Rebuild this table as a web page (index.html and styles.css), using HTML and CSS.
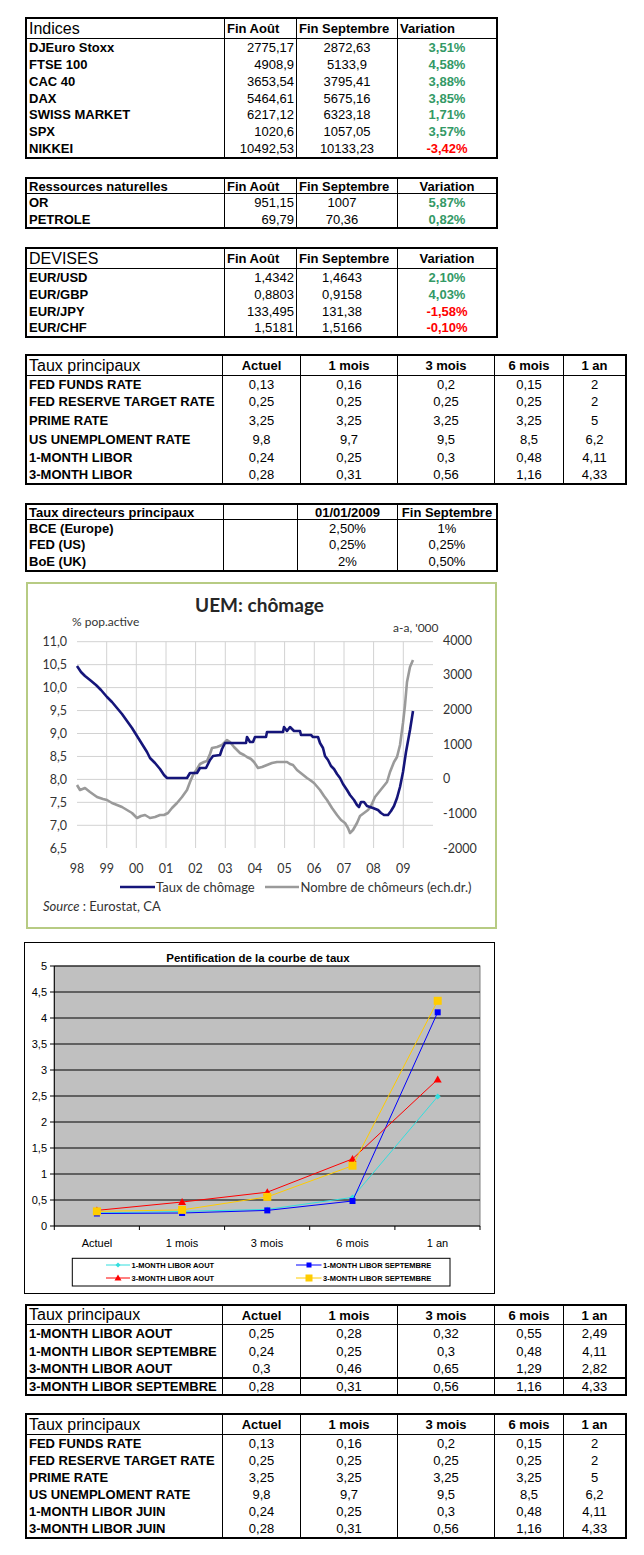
FILE: index.html
```html
<!DOCTYPE html>
<html lang="fr">
<head>
<meta charset="utf-8">
<title>Marchés</title>
<link rel="stylesheet" href="styles.css">
</head>
<body>
<main class="page">

  <section class="tbl cols4 t-idx">
    <div class="row hd"><div class="c big">Indices</div><div class="c b">Fin Août</div><div class="c b">Fin Septembre</div><div class="c b">Variation</div></div>
    <div class="row"><div class="c b">DJEuro Stoxx</div><div class="c r">2775,17</div><div class="c m">2872,63</div><div class="c m b up">3,51%</div></div>
    <div class="row"><div class="c b">FTSE 100</div><div class="c r">4908,9</div><div class="c m">5133,9</div><div class="c m b up">4,58%</div></div>
    <div class="row"><div class="c b">CAC 40</div><div class="c r">3653,54</div><div class="c m">3795,41</div><div class="c m b up">3,88%</div></div>
    <div class="row"><div class="c b">DAX</div><div class="c r">5464,61</div><div class="c m">5675,16</div><div class="c m b up">3,85%</div></div>
    <div class="row"><div class="c b">SWISS MARKET</div><div class="c r">6217,12</div><div class="c m">6323,18</div><div class="c m b up">1,71%</div></div>
    <div class="row"><div class="c b">SPX</div><div class="c r">1020,6</div><div class="c m">1057,05</div><div class="c m b up">3,57%</div></div>
    <div class="row"><div class="c b">NIKKEI</div><div class="c r">10492,53</div><div class="c m">10133,23</div><div class="c m b down">-3,42%</div></div>
  </section>

  <section class="tbl cols4 t-res">
    <div class="row hd"><div class="c b">Ressources naturelles</div><div class="c b">Fin Août</div><div class="c b">Fin Septembre</div><div class="c b m">Variation</div></div>
    <div class="row"><div class="c b">OR</div><div class="c r">951,15</div><div class="c m off">1007</div><div class="c m b up">5,87%</div></div>
    <div class="row"><div class="c b">PETROLE</div><div class="c r">69,79</div><div class="c m off">70,36</div><div class="c m b up">0,82%</div></div>
  </section>

  <section class="tbl cols4 t-dev">
    <div class="row hd"><div class="c big">DEVISES</div><div class="c b">Fin Août</div><div class="c b">Fin Septembre</div><div class="c b m">Variation</div></div>
    <div class="row"><div class="c b">EUR/USD</div><div class="c r">1,4342</div><div class="c m off">1,4643</div><div class="c m b up">2,10%</div></div>
    <div class="row"><div class="c b">EUR/GBP</div><div class="c r">0,8803</div><div class="c m off">0,9158</div><div class="c m b up">4,03%</div></div>
    <div class="row"><div class="c b">EUR/JPY</div><div class="c r">133,495</div><div class="c m off">131,38</div><div class="c m b down">-1,58%</div></div>
    <div class="row"><div class="c b">EUR/CHF</div><div class="c r">1,5181</div><div class="c m off">1,5166</div><div class="c m b down">-0,10%</div></div>
  </section>

  <section class="tbl cols6 t-taux1">
    <div class="row hd"><div class="c big">Taux principaux</div><div class="c b m">Actuel</div><div class="c b m">1 mois</div><div class="c b m">3 mois</div><div class="c b m">6 mois</div><div class="c b m">1 an</div></div>
    <div class="row"><div class="c b">FED FUNDS RATE</div><div class="c m">0,13</div><div class="c m">0,16</div><div class="c m">0,2</div><div class="c m">0,15</div><div class="c m">2</div></div>
    <div class="row"><div class="c b">FED RESERVE TARGET RATE</div><div class="c m">0,25</div><div class="c m">0,25</div><div class="c m">0,25</div><div class="c m">0,25</div><div class="c m">2</div></div>
    <div class="row"><div class="c b">PRIME RATE</div><div class="c m">3,25</div><div class="c m">3,25</div><div class="c m">3,25</div><div class="c m">3,25</div><div class="c m">5</div></div>
    <div class="row"><div class="c b">US UNEMPLOMENT RATE</div><div class="c m">9,8</div><div class="c m">9,7</div><div class="c m">9,5</div><div class="c m">8,5</div><div class="c m">6,2</div></div>
    <div class="row"><div class="c b">1-MONTH LIBOR</div><div class="c m">0,24</div><div class="c m">0,25</div><div class="c m">0,3</div><div class="c m">0,48</div><div class="c m">4,11</div></div>
    <div class="row"><div class="c b">3-MONTH LIBOR</div><div class="c m">0,28</div><div class="c m">0,31</div><div class="c m">0,56</div><div class="c m">1,16</div><div class="c m">4,33</div></div>
  </section>

  <section class="tbl cols4d t-dir">
    <div class="row hd"><div class="c b">Taux directeurs principaux</div><div class="c"></div><div class="c b m">01/01/2009</div><div class="c b m">Fin Septembre</div></div>
    <div class="row"><div class="c b">BCE (Europe)</div><div class="c"></div><div class="c m">2,50%</div><div class="c m">1%</div></div>
    <div class="row"><div class="c b">FED (US)</div><div class="c"></div><div class="c m">0,25%</div><div class="c m">0,25%</div></div>
    <div class="row"><div class="c b">BoE (UK)</div><div class="c"></div><div class="c m">2%</div><div class="c m">0,50%</div></div>
  </section>

  <figure class="chart chart-uem">
    <svg class="chart-svg" width="467" height="343" viewBox="28 584 467 343" xmlns="http://www.w3.org/2000/svg">
      <text class="u-title" x="259.5" y="611.5">UEM: chômage</text>
      <text class="u-small" x="72" y="625.5">% pop.active</text>
      <text class="u-small" x="393" y="632">a-a, '000</text>
      <g class="u-grid">
        <line x1="77" y1="641.7" x2="433" y2="641.7"/>
        <line x1="77" y1="664.65" x2="433" y2="664.65"/>
        <line x1="77" y1="687.6" x2="433" y2="687.6"/>
        <line x1="77" y1="710.55" x2="433" y2="710.55"/>
        <line x1="77" y1="733.5" x2="433" y2="733.5"/>
        <line x1="77" y1="756.45" x2="433" y2="756.45"/>
        <line x1="77" y1="779.4" x2="433" y2="779.4"/>
        <line x1="77" y1="802.35" x2="433" y2="802.35"/>
        <line x1="77" y1="825.3" x2="433" y2="825.3"/>
        <line x1="106.7" y1="641.7" x2="106.7" y2="848"/>
        <line x1="136.3" y1="641.7" x2="136.3" y2="848"/>
        <line x1="166" y1="641.7" x2="166" y2="848"/>
        <line x1="195.6" y1="641.7" x2="195.6" y2="848"/>
        <line x1="225.3" y1="641.7" x2="225.3" y2="848"/>
        <line x1="255" y1="641.7" x2="255" y2="848"/>
        <line x1="284.6" y1="641.7" x2="284.6" y2="848"/>
        <line x1="314.3" y1="641.7" x2="314.3" y2="848"/>
        <line x1="344" y1="641.7" x2="344" y2="848"/>
        <line x1="373.6" y1="641.7" x2="373.6" y2="848"/>
        <line x1="403.3" y1="641.7" x2="403.3" y2="848"/>
      </g>
      <g class="u-axis u-left">
        <text x="67" y="646">11,0</text>
        <text x="67" y="669">10,5</text>
        <text x="67" y="692">10,0</text>
        <text x="67" y="715">9,5</text>
        <text x="67" y="738">9,0</text>
        <text x="67" y="760.5">8,5</text>
        <text x="67" y="783.5">8,0</text>
        <text x="67" y="806.5">7,5</text>
        <text x="67" y="829.5">7,0</text>
        <text x="67" y="852.5">6,5</text>
      </g>
      <g class="u-axis">
        <text x="443" y="644.5">4000</text>
        <text x="443" y="679">3000</text>
        <text x="443" y="713.5">2000</text>
        <text x="443" y="748.5">1000</text>
        <text x="443" y="783">0</text>
        <text x="443" y="817.5">-1000</text>
        <text x="443" y="852.5">-2000</text>
      </g>
      <g class="u-axis u-mid">
        <text x="77" y="872.5">98</text>
        <text x="106.7" y="872.5">99</text>
        <text x="136.3" y="872.5">00</text>
        <text x="166" y="872.5">01</text>
        <text x="195.6" y="872.5">02</text>
        <text x="225.3" y="872.5">03</text>
        <text x="255" y="872.5">04</text>
        <text x="284.6" y="872.5">05</text>
        <text x="314.3" y="872.5">06</text>
        <text x="344" y="872.5">07</text>
        <text x="373.6" y="872.5">08</text>
        <text x="403.3" y="872.5">09</text>
      </g>
      <polyline class="u-gray" points="77,785 80,790 85,788 90,792 97,797 103,799 107,800 112,803 117,805 122,807 127,810 132,813 137,818 141,816 145,815 150,818 155,817 160,815 164,815 168,813 172,808 177,803 182,797 187,790 190,782 193,775 197,769 200,764 204,762 207,761 210,754 212,748 217,747 222,745 227,740 230,742 234,747 240,753 244,755 247,757 251,759 254,762 258,768 262,767 267,765 272,763 277,762 282,762 287,762 290,764 293,765 297,770 302,774 307,778 310,780 314,783 320,790 324,796 327,800 332,808 337,815 341,820 345,823 348,828 350,833 353,830 357,823 360,816 364,813 368,810 371,806 375,797 379,792 383,787 387,782 390,772 394,762 397,757 400,745 403,723 405,705 407,682 410,667 413,660"/>
      <polyline class="u-navy" points="77,666 81,672 85,676 90,680 96,685 101,690 107,697 112,702 117,708 122,714 127,721 132,728 137,736 142,744 147,752 150,758 155,763 160,769 164,775 167,778 187,778 190,773 197,773 200,768 206,768 210,760 213,756 220,755 222,749 225,743 246,743 247,737 250,742 253,742 255,737 266,737 267,732 283,732 284,727 287,731 290,727 294,731 300,731 301,735 311,735 313,737 318,737 320,743 323,748 325,756 328,760 331,766 334,769 337,774 340,778 343,784 347,790 350,795 354,800 357,805 359,807 361,802 364,802 367,806 373,808 378,810 381,813 384,815 388,815 391,811 394,806 397,798 400,787 403,772 406,752 410,730 413,711"/>
      <line class="u-navy" x1="120" y1="887" x2="155" y2="887"/>
      <text class="u-leg" x="156" y="891.5">Taux de chômage</text>
      <line class="u-gray" x1="265" y1="887" x2="299" y2="887"/>
      <text class="u-leg" x="300.5" y="891.5">Nombre de chômeurs (ech.dr.)</text>
      <text class="u-leg" x="43" y="911"><tspan class="u-it">Source</tspan> : Eurostat, CA</text>
    </svg>
  </figure>

  <figure class="chart chart-pent">
    <svg class="chart-svg" width="469" height="350" viewBox="25 943 469 350" xmlns="http://www.w3.org/2000/svg">
      <text class="p-title" x="258" y="962">Pentification de la courbe de taux</text>
      <rect class="p-plot" x="54.3" y="966" width="425.7" height="260"/>
      <g class="p-grid">
        <line x1="54.3" y1="966" x2="480" y2="966"/>
        <line x1="54.3" y1="992" x2="480" y2="992"/>
        <line x1="54.3" y1="1018" x2="480" y2="1018"/>
        <line x1="54.3" y1="1044" x2="480" y2="1044"/>
        <line x1="54.3" y1="1070" x2="480" y2="1070"/>
        <line x1="54.3" y1="1096" x2="480" y2="1096"/>
        <line x1="54.3" y1="1122" x2="480" y2="1122"/>
        <line x1="54.3" y1="1148" x2="480" y2="1148"/>
        <line x1="54.3" y1="1174" x2="480" y2="1174"/>
        <line x1="54.3" y1="1200" x2="480" y2="1200"/>
        <line x1="54.3" y1="966" x2="54.3" y2="1226"/>
        <line x1="54.3" y1="1226" x2="480" y2="1226"/>
        <line x1="50" y1="966" x2="54.3" y2="966"/>
        <line x1="50" y1="992" x2="54.3" y2="992"/>
        <line x1="50" y1="1018" x2="54.3" y2="1018"/>
        <line x1="50" y1="1044" x2="54.3" y2="1044"/>
        <line x1="50" y1="1070" x2="54.3" y2="1070"/>
        <line x1="50" y1="1096" x2="54.3" y2="1096"/>
        <line x1="50" y1="1122" x2="54.3" y2="1122"/>
        <line x1="50" y1="1148" x2="54.3" y2="1148"/>
        <line x1="50" y1="1174" x2="54.3" y2="1174"/>
        <line x1="50" y1="1200" x2="54.3" y2="1200"/>
        <line x1="50" y1="1226" x2="54.3" y2="1226"/>
        <line x1="54.3" y1="1226" x2="54.3" y2="1230"/>
        <line x1="139.4" y1="1226" x2="139.4" y2="1230"/>
        <line x1="224.6" y1="1226" x2="224.6" y2="1230"/>
        <line x1="309.7" y1="1226" x2="309.7" y2="1230"/>
        <line x1="394.9" y1="1226" x2="394.9" y2="1230"/>
        <line x1="480" y1="1226" x2="480" y2="1230"/>
      </g>
      <g class="p-axis p-left">
        <text x="47" y="970">5</text>
        <text x="47" y="996">4,5</text>
        <text x="47" y="1022">4</text>
        <text x="47" y="1048">3,5</text>
        <text x="47" y="1074">3</text>
        <text x="47" y="1100">2,5</text>
        <text x="47" y="1126">2</text>
        <text x="47" y="1152">1,5</text>
        <text x="47" y="1178">1</text>
        <text x="47" y="1204">0,5</text>
        <text x="47" y="1230">0</text>
      </g>
      <g class="p-axis p-mid">
        <text x="97" y="1247">Actuel</text>
        <text x="182" y="1247">1 mois</text>
        <text x="267" y="1247">3 mois</text>
        <text x="352.5" y="1247">6 mois</text>
        <text x="437.5" y="1247">1 an</text>
      </g>
      <polyline class="s-cyan" points="96.9,1213 182.1,1211.4 267.3,1209.4 352.5,1197.4 437.7,1096.5"/>
      <g class="s-cyan-m">
        <polygon points="96.9,1210 99.9,1213 96.9,1216 93.9,1213"/>
        <polygon points="182.1,1208.4 185.1,1211.4 182.1,1214.4 179.1,1211.4"/>
        <polygon points="267.3,1206.4 270.3,1209.4 267.3,1212.4 264.3,1209.4"/>
        <polygon points="352.5,1194.4 355.5,1197.4 352.5,1200.4 349.5,1197.4"/>
        <polygon points="437.7,1093.5 440.7,1096.5 437.7,1099.5 434.7,1096.5"/>
      </g>
      <polyline class="s-blue" points="96.9,1213.5 182.1,1213 267.3,1210.4 352.5,1201 437.7,1012.3"/>
      <g class="s-blue-m">
        <rect x="93.9" y="1210.5" width="6" height="6"/>
        <rect x="179.1" y="1210" width="6" height="6"/>
        <rect x="264.3" y="1207.4" width="6" height="6"/>
        <rect x="349.5" y="1198" width="6" height="6"/>
        <rect x="434.7" y="1009.3" width="6" height="6"/>
      </g>
      <polyline class="s-red" points="96.9,1210.4 182.1,1202 267.3,1192.2 352.5,1158.9 437.7,1079.4"/>
      <g class="s-red-m">
        <polygon points="96.9,1206.4 100.9,1213.4 92.9,1213.4"/>
        <polygon points="182.1,1198 186.1,1205 178.1,1205"/>
        <polygon points="267.3,1188.2 271.3,1195.2 263.3,1195.2"/>
        <polygon points="352.5,1154.9 356.5,1161.9 348.5,1161.9"/>
        <polygon points="437.7,1075.4 441.7,1082.4 433.7,1082.4"/>
      </g>
      <polyline class="s-gold" points="96.9,1211.4 182.1,1209.9 267.3,1196.9 352.5,1165.7 437.7,1000.8"/>
      <g class="s-gold-m">
        <rect x="92.9" y="1207.4" width="8" height="8"/>
        <rect x="178.1" y="1205.9" width="8" height="8"/>
        <rect x="263.3" y="1192.9" width="8" height="8"/>
        <rect x="348.5" y="1161.7" width="8" height="8"/>
        <rect x="433.7" y="996.8" width="8" height="8"/>
      </g>
      <rect class="p-legend" x="72.3" y="1258.3" width="377.7" height="27.7"/>
      <line class="s-cyan" x1="106" y1="1265" x2="130" y2="1265"/>
      <polygon class="s-cyan-m" points="118,1262.5 120.5,1265 118,1267.5 115.5,1265"/>
      <text class="p-leg" x="131.5" y="1267.7">1-MONTH LIBOR AOUT</text>
      <line class="s-blue" x1="296" y1="1265" x2="321.5" y2="1265"/>
      <rect class="s-blue-m" x="306.5" y="1262.5" width="5" height="5"/>
      <text class="p-leg" x="323" y="1267.7">1-MONTH LIBOR SEPTEMBRE</text>
      <line class="s-red" x1="106" y1="1278" x2="130" y2="1278"/>
      <polygon class="s-red-m" points="118,1274.5 121.5,1280.5 114.5,1280.5"/>
      <text class="p-leg" x="131.5" y="1280.7">3-MONTH LIBOR AOUT</text>
      <line class="s-gold" x1="296" y1="1278" x2="321.5" y2="1278"/>
      <rect class="s-gold-m" x="305.5" y="1274.5" width="7" height="7"/>
      <text class="p-leg" x="323" y="1280.7">3-MONTH LIBOR SEPTEMBRE</text>
    </svg>
  </figure>

  <section class="tbl cols6 t-taux2">
    <div class="row hd"><div class="c big">Taux principaux</div><div class="c b m">Actuel</div><div class="c b m">1 mois</div><div class="c b m">3 mois</div><div class="c b m">6 mois</div><div class="c b m">1 an</div></div>
    <div class="row"><div class="c b">1-MONTH LIBOR AOUT</div><div class="c m">0,25</div><div class="c m">0,28</div><div class="c m">0,32</div><div class="c m">0,55</div><div class="c m">2,49</div></div>
    <div class="row"><div class="c b">1-MONTH LIBOR SEPTEMBRE</div><div class="c m">0,24</div><div class="c m">0,25</div><div class="c m">0,3</div><div class="c m">0,48</div><div class="c m">4,11</div></div>
    <div class="row"><div class="c b">3-MONTH LIBOR AOUT</div><div class="c m">0,3</div><div class="c m">0,46</div><div class="c m">0,65</div><div class="c m">1,29</div><div class="c m">2,82</div></div>
    <div class="row sep"><div class="c b">3-MONTH LIBOR SEPTEMBRE</div><div class="c m">0,28</div><div class="c m">0,31</div><div class="c m">0,56</div><div class="c m">1,16</div><div class="c m">4,33</div></div>
  </section>

  <section class="tbl cols6 t-taux3">
    <div class="row hd"><div class="c big">Taux principaux</div><div class="c b m">Actuel</div><div class="c b m">1 mois</div><div class="c b m">3 mois</div><div class="c b m">6 mois</div><div class="c b m">1 an</div></div>
    <div class="row"><div class="c b">FED FUNDS RATE</div><div class="c m">0,13</div><div class="c m">0,16</div><div class="c m">0,2</div><div class="c m">0,15</div><div class="c m">2</div></div>
    <div class="row"><div class="c b">FED RESERVE TARGET RATE</div><div class="c m">0,25</div><div class="c m">0,25</div><div class="c m">0,25</div><div class="c m">0,25</div><div class="c m">2</div></div>
    <div class="row"><div class="c b">PRIME RATE</div><div class="c m">3,25</div><div class="c m">3,25</div><div class="c m">3,25</div><div class="c m">3,25</div><div class="c m">5</div></div>
    <div class="row"><div class="c b">US UNEMPLOMENT RATE</div><div class="c m">9,8</div><div class="c m">9,7</div><div class="c m">9,5</div><div class="c m">8,5</div><div class="c m">6,2</div></div>
    <div class="row"><div class="c b">1-MONTH LIBOR JUIN</div><div class="c m">0,24</div><div class="c m">0,25</div><div class="c m">0,3</div><div class="c m">0,48</div><div class="c m">4,11</div></div>
    <div class="row"><div class="c b">3-MONTH LIBOR JUIN</div><div class="c m">0,28</div><div class="c m">0,31</div><div class="c m">0,56</div><div class="c m">1,16</div><div class="c m">4,33</div></div>
  </section>

</main>
</body>
</html>
```

FILE: styles.css
```css
* { box-sizing: border-box; }

html, body {
  margin: 0;
  padding: 0;
  background: #ffffff;
}

body {
  font-family: "Liberation Sans", Arial, sans-serif;
  color: #000;
}

.page {
  display: flex;
  flex-direction: column;
  align-items: flex-start;
  padding: 17px 0 0 25px;
}

/* ---------- spreadsheet tables ---------- */
.tbl {
  display: grid;
  border: 2px solid #000;
  background: #fff;
}

.cols4  { grid-template-columns: 197px 72px 101px 99px; }
.cols4d { grid-template-columns: 196px 74px 100px 99px; }
.cols6  { grid-template-columns: 195px 78px 97px 97px 69px 62px; }

.row { display: contents; }

.c {
  display: flex;
  align-items: center;
  padding: 0 2px;
  font-size: 13px;
  line-height: 1;
  white-space: nowrap;
  overflow: hidden;
}

.row > .c + .c { border-left: 1px solid #000; }
.hd > .c { border-bottom: 1px solid #000; }
.sep > .c { border-top: 2px solid #000; }

.big { font-size: 16px; font-weight: 400; }
.b { font-weight: 700; }
.r { justify-content: flex-end; }
.m { justify-content: center; }
.off { padding-right: 12px; }

.up { color: #339966; }
.down { color: #ff0000; }

.t-idx   { grid-template-rows: 20px repeat(7, 16.86px); }
.t-res   { margin-top: 18px; grid-template-rows: 15px repeat(2, 16.7px); }
.t-dev   { margin-top: 18px; grid-template-rows: 20px repeat(4, 16.7px); }
.t-taux1 { margin-top: 16px; grid-template-rows: 20px 17px 17px 20px 19px 17px 17px; }
.t-dir   { margin-top: 18px; grid-template-rows: 15px repeat(3, 16.5px); }
.t-taux2 { margin-top: 10px; grid-template-rows: 19px repeat(4, 17.25px); }
.t-taux3 { margin-top: 17px; grid-template-rows: 20px repeat(6, 17px); }

/* ---------- charts ---------- */
.chart {
  margin: 0;
  background: #fff;
}

.chart-svg { display: block; }

.chart-uem {
  margin-top: 10.5px;
  margin-left: 1px;
  width: 471px;
  height: 347px;
  border: 2px solid #b7cb83;
}

.chart-pent {
  margin-top: 13px;
  margin-left: -1px;
  width: 471px;
  height: 352px;
  border: 1px solid #000;
}

/* UEM chart */
.u-title {
  font-family: Lato, "Open Sans", sans-serif;
  font-size: 19px;
  font-weight: 700;
  fill: #262626;
  text-anchor: middle;
}
.u-small {
  font-family: Lato, "Open Sans", sans-serif;
  font-size: 12px;
  fill: #333;
}
.u-grid line {
  stroke: #d2d2d2;
  stroke-width: 1;
}
.u-axis text {
  font-family: Lato, "Open Sans", sans-serif;
  font-size: 12.5px;
  fill: #333;
}
.u-left text { text-anchor: end; }
.u-mid text { text-anchor: middle; }
.u-navy {
  fill: none;
  stroke: #15157a;
  stroke-width: 2.6;
  stroke-linejoin: round;
}
.u-gray {
  fill: none;
  stroke: #9a9a9a;
  stroke-width: 2.6;
  stroke-linejoin: round;
}
.u-leg {
  font-family: Lato, "Open Sans", sans-serif;
  font-size: 13px;
  fill: #333;
}
.u-it { font-style: italic; }

/* Pentification chart */
.p-title {
  font-family: "Liberation Sans", Arial, sans-serif;
  font-size: 11.5px;
  font-weight: 700;
  fill: #000;
  text-anchor: middle;
}
.p-plot {
  fill: #c0c0c0;
  stroke: #808080;
  stroke-width: 1;
}
.p-grid line {
  stroke: #000;
  stroke-width: 1;
}
.p-axis text {
  font-family: "Liberation Sans", Arial, sans-serif;
  font-size: 11px;
  fill: #000;
}
.p-left text { text-anchor: end; }
.p-mid text { text-anchor: middle; }

.s-cyan { fill: none; stroke: #33dede; stroke-width: 1; }
.s-cyan-m { fill: #33dede; }
.s-blue { fill: none; stroke: #0000ff; stroke-width: 1; }
.s-blue-m { fill: #0000ff; }
.s-red { fill: none; stroke: #ff0000; stroke-width: 1; }
.s-red-m { fill: #ff0000; }
.s-gold { fill: none; stroke: #ffcc00; stroke-width: 1; }
.s-gold-m { fill: #ffcc00; }

.p-legend {
  fill: #fff;
  stroke: #000;
  stroke-width: 1;
}
.p-leg {
  font-family: "Liberation Sans", Arial, sans-serif;
  font-size: 7.5px;
  font-weight: 700;
  fill: #000;
}
```
